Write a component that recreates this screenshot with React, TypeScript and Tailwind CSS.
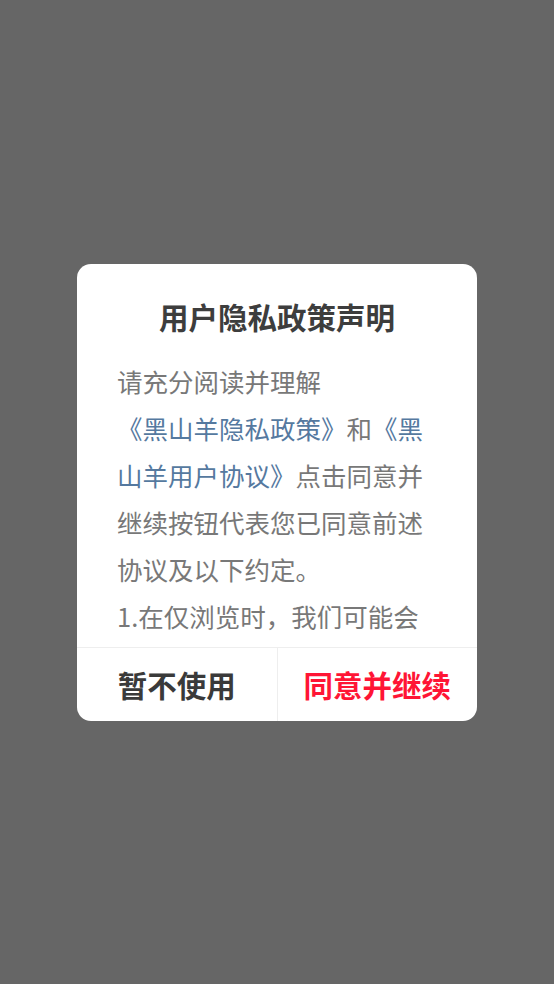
import React from "react";

export default function App() {
  return (
    <div
      className="w-full h-[984px] bg-[#666666] flex items-center justify-center"
      style={{ fontFamily: '"Noto Sans CJK SC", "Noto Sans", sans-serif' }}
    >
      <div className="w-[400px] bg-white rounded-[14px] overflow-hidden flex flex-col">
        <div className="pt-[32px] h-[93px] text-center text-[29.5px] leading-[40px] font-bold text-[#3d3d3d]">
          用户隐私政策声明
        </div>
        <div className="h-[290px] overflow-hidden px-[40px] text-[25.5px] leading-[47px] text-[#787878]">
          请充分阅读并理解
          <br />
          <span className="text-[#55799f]">《黑山羊隐私政策》</span>和
          <span className="text-[#55799f]">《黑山羊用户协议》</span>
          点击同意并继续按钮代表您已同意前述协议及以下约定。
          <br />
          1.在仅浏览时，我们可能会收集您的设备信息以保障您正常使用我们的服务。
        </div>
        <div className="flex h-[74px] border-t border-[#eeeeee]">
          <button className="flex-1 flex items-center justify-center text-[29.5px] font-bold text-[#3a3a3a]">
            暂不使用
          </button>
          <button className="flex-1 flex items-center justify-center border-l border-[#eeeeee] text-[29.5px] font-bold text-[#ff1535]">
            同意并继续
          </button>
        </div>
      </div>
    </div>
  );
}
